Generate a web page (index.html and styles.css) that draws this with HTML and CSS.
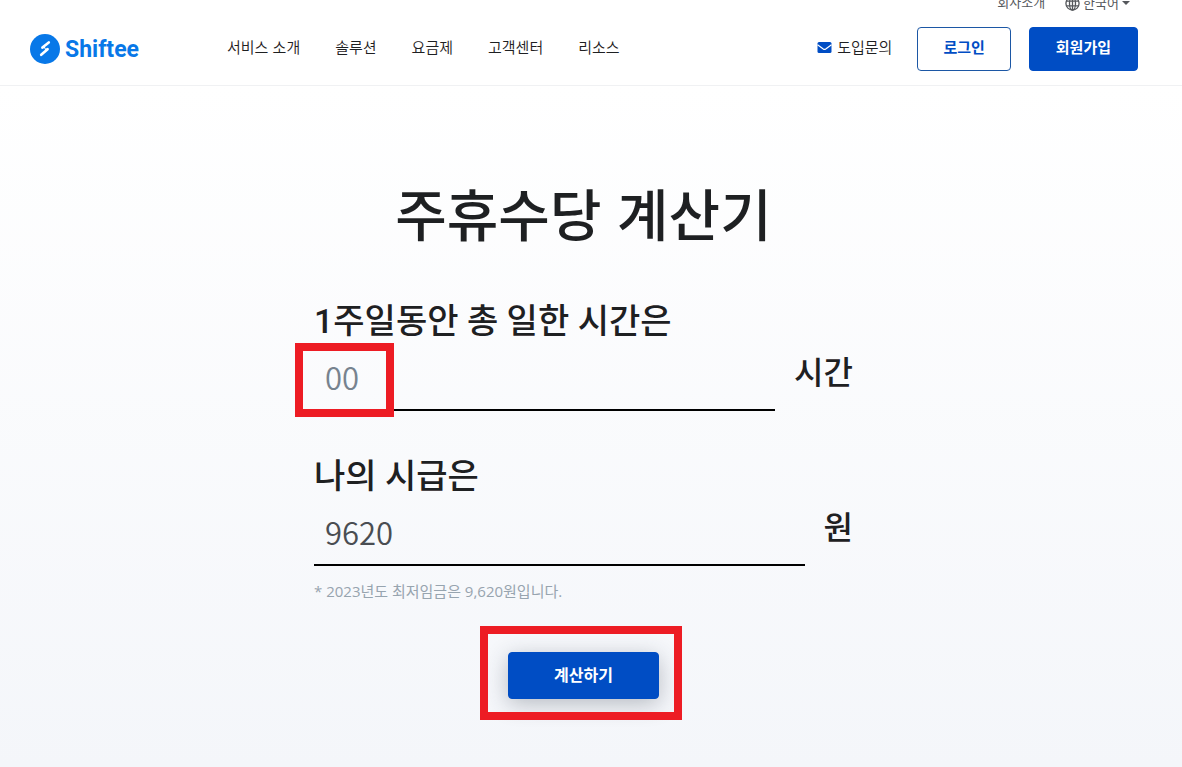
FILE: index.html
```html
<!DOCTYPE html>
<html lang="ko">
<head>
<meta charset="utf-8">
<meta name="viewport" content="width=device-width, initial-scale=1">
<title>주휴수당 계산기 - Shiftee</title>
<link rel="stylesheet" href="styles.css">
</head>
<body>
<header class="header">
  <div class="utility">
    <a href="#">회사소개</a>
    <button class="language" type="button">
      <svg class="globe" viewBox="0 0 16 16" aria-hidden="true"><g fill="none" stroke="currentColor" stroke-width="1.4"><circle cx="8" cy="8" r="7"/><ellipse cx="8" cy="8" rx="3.2" ry="7"/><path d="M8 1v14M1.5 5.5h13M1.5 10.5h13"/></g></svg>
      한국어
      <svg class="caret" viewBox="0 0 8 4" aria-hidden="true"><path d="M0 0h8L4 4z" fill="currentColor"/></svg>
    </button>
  </div>
  <div class="bar">
    <a class="logo" href="#">
      <svg class="logo-mark" viewBox="0 0 30 30" aria-hidden="true"><circle cx="15" cy="15" r="15" fill="#0878e8"/><path d="M18.8 8.4 12.4 13.6M17.6 15.2 11.2 20.8" fill="none" stroke="#fff" stroke-width="2.6" stroke-linecap="round"/><path d="M12 14.2h3.6l-1.4-2zM18 14.6h-3.6l1.4 2z" fill="#fff"/></svg>
      <span>Shiftee</span>
    </a>
    <nav class="nav">
      <a href="#">서비스 소개</a>
      <a href="#">솔루션</a>
      <a href="#">요금제</a>
      <a href="#">고객센터</a>
      <a href="#">리소스</a>
    </nav>
    <div class="actions">
      <a class="contact" href="#">
        <svg class="mail" viewBox="0 0 14 11" aria-hidden="true"><rect width="14" height="11" rx="1.5" fill="#004dc4"/><path d="M0 2.8 5.8 7q1.2.8 2.4 0L14 2.8" fill="none" stroke="#fff" stroke-width="1.2"/></svg>
        도입문의
      </a>
      <button class="button button-outline" type="button">로그인</button>
      <button class="button button-solid" type="button">회원가입</button>
    </div>
  </div>
</header>
<main class="main">
  <h1 class="title">주휴수당 계산기</h1>
  <form class="form">
    <div class="group">
      <label class="label" for="hours">1주일동안 총 일한 시간은</label>
      <div class="row">
        <div class="field">
          <input class="input" id="hours" type="text" inputmode="numeric" placeholder="00">
          <span class="mark mark-field"></span>
        </div>
        <span class="unit">시간</span>
      </div>
    </div>
    <div class="group">
      <label class="label" for="wage">나의 시급은</label>
      <div class="row">
        <div class="field"><input class="input" id="wage" type="text" inputmode="numeric" value="9620"></div>
        <span class="unit">원</span>
      </div>
    </div>
    <p class="note">* 2023년도 최저임금은 9,620원입니다.</p>
    <div class="submit">
      <button class="button button-submit" type="button">계산하기</button>
      <span class="mark mark-submit"></span>
    </div>
  </form>
</main>
</body>
</html>
```

FILE: styles.css
```css
* { box-sizing: border-box; }
html { height: 100%; }
body {
  margin: 0;
  min-height: 100%;
  display: flex;
  flex-direction: column;
  font-family: "Noto Sans CJK KR", sans-serif;
  color: #1e2022;
  background: #fff;
}
a { color: inherit; text-decoration: none; }
button, input { font-family: inherit; }

.header {
  height: 86px;
  padding: 0 44px 0 30px;
  overflow: hidden;
  border-bottom: 1px solid #f0f1f3;
  background: #fff;
}
.utility {
  display: flex;
  justify-content: flex-end;
  align-items: center;
  gap: 20px;
  height: 20px;
  margin-top: -7px;
  padding-right: 8px;
  font-size: 13px;
  line-height: 20px;
  color: #55585c;
}
.utility a { padding-bottom: 2px; }
.language {
  display: flex;
  align-items: center;
  gap: 3px;
  padding: 0;
  border: 0;
  background: none;
  color: inherit;
  font-size: 13px;
  line-height: 18px;
}
.globe { width: 15px; height: 15px; }
.caret { width: 8px; height: 4px; }

.bar {
  display: flex;
  align-items: center;
  height: 44px;
  margin-top: 14px;
}
.logo {
  display: flex;
  align-items: center;
  gap: 5px;
  width: 197px;
  color: #0878e8;
  font: 700 23px/30px Roboto, sans-serif;
}
.logo span { padding-top: 2px; }
.logo-mark { width: 30px; height: 30px; }
.nav {
  display: flex;
  gap: 35px;
  padding-bottom: 4px;
  font-size: 15px;
  font-weight: 350;
  line-height: 20px;
  white-space: nowrap;
}
.actions {
  display: flex;
  align-items: center;
  gap: 18px;
  margin-left: auto;
}
.contact {
  display: flex;
  align-items: center;
  gap: 5px;
  margin-right: 7px;
  padding-bottom: 4px;
  font-size: 15px;
  font-weight: 350;
  line-height: 20px;
}
.mail { width: 15px; height: 11px; }

.button {
  height: 44px;
  padding: 0 26px 4px;
  border: 1px solid #004dc4;
  border-radius: 4px;
  font-size: 15px;
  font-weight: 700;
  line-height: 20px;
  white-space: nowrap;
}
.button-outline { padding: 0 25px 4px; background: #fff; color: #004dc4; border-color: #1c57a5; }
.button-solid { background: #004dc4; color: #fff; }

.main {
  flex: 1;
  padding: 86px 15px 47px 0;
  background: linear-gradient(#fff, #f4f6fa);
}
.title {
  margin: 0;
  font-size: 56px;
  line-height: 80px;
  font-weight: 500;
  text-align: center;
}
.form {
  width: 100%;
  max-width: 539px;
  margin: 44px auto 0;
}
.group { margin-bottom: 40px; }
.label {
  display: block;
  font-family: Roboto, "Noto Sans CJK KR", sans-serif;
  font-size: 34px;
  line-height: 50px;
  font-weight: 500;
}
.row {
  display: flex;
  gap: 19px;
}
.field {
  position: relative;
  flex: 1;
}
.input {
  display: block;
  width: 100%;
  height: 65px;
  padding: 0 11px 2px;
  border: 0;
  border-bottom: 2px solid #000;
  background: none;
  outline: none;
  font-size: 31px;
  font-weight: 350;
  color: #4a4d52;
}
.input::placeholder { color: #77838f; opacity: 1; }
.unit {
  font-size: 32px;
  line-height: 48px;
  font-weight: 500;
}
.note {
  margin: -27px 0 0;
  font-family: "Open Sans", "Noto Sans CJK KR", sans-serif;
  font-size: 15px;
  line-height: 24px;
  color: #97a4af;
}
.submit {
  position: relative;
  width: fit-content;
  margin: 49px auto 0;
}
.button-submit {
  display: block;
  width: 151px;
  height: 47px;
  background: #004dc4;
  color: #fff;
  font-size: 16px;
  box-shadow: 0 5px 22px rgba(40, 50, 65, 0.3);
}
.mark {
  position: absolute;
  border: 8px solid #ed1c24;
  pointer-events: none;
}
.mark-field { left: -19px; top: -3px; width: 99px; height: 74px; }
.mark-submit { inset: -26px -23px -21px -28px; }
```
